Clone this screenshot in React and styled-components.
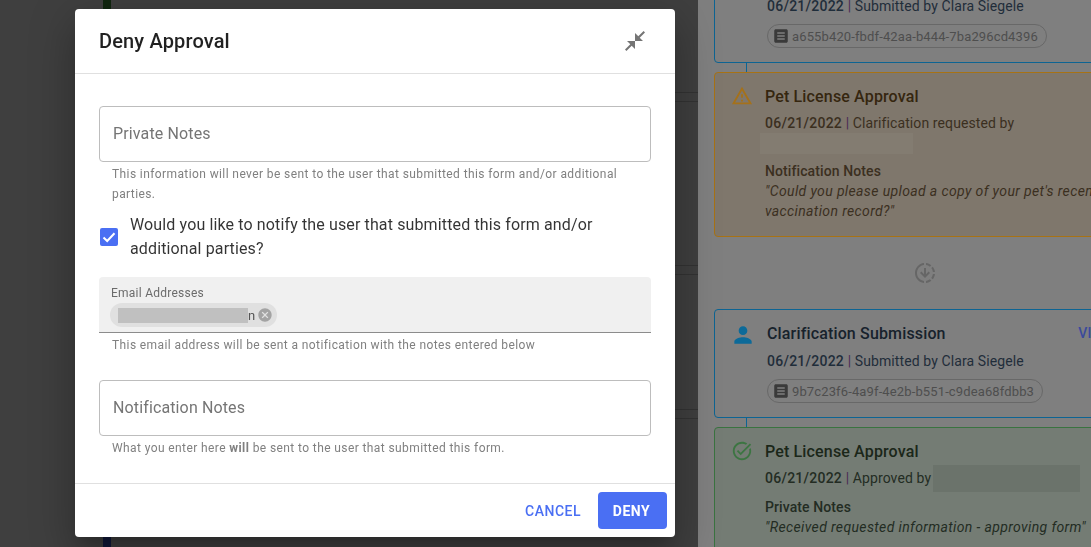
import React from 'react';
import styled, { createGlobalStyle } from 'styled-components';

const GlobalStyle = createGlobalStyle`
  html, body { margin: 0; padding: 0; height: 100%; overflow: hidden; }
  body { font-family: Roboto, "Liberation Sans", sans-serif; }
`;

const Page = styled.div`
  display: flex;
  width: 1091px;
  height: 547px;
  overflow: hidden;
`;

/* dimmed list behind the dialog */
const ListPane = styled.div`
  display: flex;
  flex: 0 0 698px;
  height: 100%;
  background: #3f3f3f;
`;
const Stripe = styled.div`
  display: flex;
  flex-direction: column;
  flex: 0 0 8px;
  margin-left: 103px;
`;
const StripePart = styled.div`
  flex: ${(p) => p.$grow};
  background: ${(p) => p.$color};
`;
const Rows = styled.div`
  flex: 1;
`;
const Row = styled.div`
  height: ${(p) => p.$height}px;
  box-sizing: border-box;
  border-bottom: 1px solid #333;
`;

/* timeline */
const TimelinePane = styled.div`
  flex: 1;
  height: 100%;
  overflow: hidden;
  background: #7f7f7f;
  padding-left: 16px;
`;
const Timeline = styled.div`
  display: flex;
  flex-direction: column;
  width: 422px;
  margin-top: -46px;
`;
const toneColors = {
  blue: { border: '#0d6493', bg: 'transparent', title: '#17222c', text: '#1f2d3a', icon: '#0c6a99' },
  orange: { border: '#a87214', bg: '#7f776c', title: '#35260f', text: '#3b2f1f', icon: '#a5711a' },
  green: { border: '#3a7340', bg: '#747c74', title: '#1b2719', text: '#232c23', icon: '#3c7542' },
};
const Card = styled.div`
  display: flex;
  gap: ${(p) => (p.$tone === 'blue' ? 11 : 12)}px;
  box-sizing: border-box;
  flex: none;
  height: ${(p) => p.$height}px;
  padding: 11px 22px 0 ${(p) => (p.$tone === 'blue' ? 15 : 16)}px;
  border: 1px solid ${(p) => toneColors[p.$tone].border};
  border-radius: 4px;
  background: ${(p) => toneColors[p.$tone].bg};
  color: ${(p) => toneColors[p.$tone].text};
`;
const CardIcon = styled.svg`
  flex: none;
  width: ${(p) => p.$size}px;
  height: ${(p) => p.$size}px;
  margin-top: 1px;
  fill: ${(p) => toneColors[p.$tone].icon};
`;
const CardBody = styled.div`
  flex: 1;
  min-width: 0;
`;
const TitleRow = styled.div`
  display: flex;
  justify-content: space-between;
  align-items: center;
  height: 24px;
  font-size: 16px;
  font-weight: 500;
  letter-spacing: 0.15px;
  color: ${(p) => toneColors[p.$tone].title};
`;
const ViewLink = styled.span`
  font-size: 14px;
  font-weight: 500;
  color: #3b4a9c;
  letter-spacing: 0.4px;
`;
const MetaLine = styled.div`
  display: flex;
  align-items: center;
  height: 20px;
  margin-top: ${(p) => p.$top}px;
  font-size: 14px;
  letter-spacing: 0.1px;
`;
const MetaText = styled.span`
  white-space: pre;
`;
const DateText = styled.span`
  font-weight: 500;
  letter-spacing: 0.25px;
`;
const Pipe = styled.span`
  color: #4a2a55;
`;
const Redacted = styled.div`
  flex: none;
  width: ${(p) => p.$width}px;
  height: ${(p) => p.$height}px;
  margin-left: ${(p) => p.$left || 0}px;
  background: ${(p) => p.$color};
`;
const IdChip = styled.div`
  display: inline-flex;
  align-items: center;
  gap: 2px;
  box-sizing: border-box;
  height: 24px;
  margin-top: 8px;
  padding: 0 8px 0 4px;
  border: 1px solid #686868;
  border-radius: 12px;
  font-size: 13px;
  letter-spacing: 0.13px;
  color: #4e4e4e;
`;
const IdIcon = styled.svg`
  width: 18px;
  height: 18px;
  fill: #3a3a3a;
`;
const NoteLabel = styled.div`
  margin-top: ${(p) => p.$top}px;
  font-size: 14px;
  line-height: 20px;
  font-weight: 500;
  letter-spacing: 0.1px;
`;
const NoteText = styled.div`
  font-size: 14px;
  line-height: 20px;
  font-style: italic;
  letter-spacing: 0.37px;
`;
const Connector = styled.div`
  flex: none;
  width: 1px;
  height: 9px;
  margin-left: 32px;
  background: #0d6493;
`;
const RoundDivider = styled.div`
  display: flex;
  align-items: center;
  justify-content: center;
  flex: none;
  height: 72px;
`;
const DividerIcon = styled.svg`
  width: 24px;
  height: 24px;
  fill: #666;
`;

/* dialog */
const ModalLayer = styled.div`
  position: fixed;
  inset: 0;
  padding: 9px 0 0 75px;
`;
const Dialog = styled.div`
  display: flex;
  flex-direction: column;
  width: 600px;
  height: 528px;
  background: #fff;
  border-radius: 4px;
  box-shadow: 0 11px 15px -7px rgba(0, 0, 0, 0.2), 0 24px 38px 3px rgba(0, 0, 0, 0.14), 0 9px 46px 8px rgba(0, 0, 0, 0.12);
`;
const DialogHeader = styled.header`
  display: flex;
  align-items: center;
  justify-content: space-between;
  box-sizing: border-box;
  height: 65px;
  padding: 0 28px 0 24px;
  border-bottom: 1px solid #e0e0e0;
`;
const DialogTitle = styled.h2`
  margin: 0;
  font-size: 20px;
  font-weight: 500;
  letter-spacing: 0.15px;
  color: rgba(0, 0, 0, 0.87);
`;
const CollapseIcon = styled.svg`
  width: 24px;
  height: 24px;
  fill: #757575;
`;
const DialogBody = styled.div`
  flex: 1;
  padding: 32px 24px 0;
`;
const OutlinedField = styled.div`
  display: flex;
  align-items: center;
  box-sizing: border-box;
  height: 56px;
  padding: 0 13px 2px;
  border: 1px solid #bdbdbd;
  border-radius: 4px;
  font-size: 16px;
  letter-spacing: 0.13px;
  color: #757575;
`;
const Helper = styled.p`
  margin: 2px 0 0;
  padding: 0 14px 0 13px;
  font-size: 12px;
  line-height: 20px;
  letter-spacing: 0.4px;
  color: #808080;
  b { font-weight: 700; }
`;
const CheckRow = styled.div`
  display: flex;
  align-items: center;
  gap: 12px;
  margin: 9px 0 16px;
  padding-left: 1px;
`;
const CheckBox = styled.div`
  display: flex;
  align-items: center;
  justify-content: center;
  flex: none;
  width: 18px;
  height: 18px;
  border-radius: 2px;
  background: #4a6ff3;
`;
const CheckLabel = styled.div`
  font-size: 16px;
  line-height: 24px;
  letter-spacing: 0.13px;
  color: rgba(0, 0, 0, 0.8);
`;
const FilledField = styled.div`
  box-sizing: border-box;
  height: 56px;
  padding: 9px 12px 0;
  background: #f0f0f0;
  border-bottom: 1px solid #8c8c8c;
  border-radius: 4px 4px 0 0;
`;
const FilledLabel = styled.div`
  height: 14px;
  font-size: 12px;
  line-height: 14px;
  letter-spacing: 0.25px;
  color: #6b6b6b;
`;
const EmailChip = styled.div`
  display: inline-flex;
  align-items: center;
  box-sizing: border-box;
  height: 24px;
  margin: 3px 0 0 -1px;
  padding: 0 4px 0 8px;
  border-radius: 12px;
  background: #e0e0e0;
  font-size: 13px;
  color: #555;
`;
const ChipDelete = styled.svg`
  width: 16px;
  height: 16px;
  margin-left: 2px;
  fill: #a3a3a3;
`;
const NotesField = styled(OutlinedField)`
  margin-top: 25px;
`;
const DialogFooter = styled.footer`
  display: flex;
  align-items: center;
  justify-content: flex-end;
  gap: 17px;
  box-sizing: border-box;
  height: 54px;
  padding: 0 8px;
  border-top: 1px solid #e0e0e0;
`;
const TextButton = styled.button`
  padding: 0;
  border: 0;
  background: none;
  font: 500 14px Roboto, sans-serif;
  letter-spacing: 0.5px;
  color: #4a6ff3;
`;
const FilledButton = styled.button`
  width: 69px;
  height: 37px;
  padding: 0 2px 0 0;
  border: 0;
  border-radius: 4px;
  background: #4a6ff3;
  font: 700 14px Roboto, sans-serif;
  letter-spacing: 0.5px;
  color: #fff;
`;

const paths = {
  person: 'M12 12c2.21 0 4-1.79 4-4s-1.79-4-4-4-4 1.79-4 4 1.79 4 4 4zm0 2c-2.67 0-8 1.34-8 4v2h16v-2c0-2.66-5.33-4-8-4z',
  warning: 'M12 5.99 19.53 19H4.47L12 5.99M12 2 1 21h22L12 2zm1 14h-2v2h2v-2zm0-6h-2v4h2v-4z',
  check: 'M22 5.18 10.59 16.6l-4.24-4.24 1.41-1.41 2.83 2.83 10-10L22 5.18zm-2.21 5.04c.13.57.21 1.17.21 1.78 0 4.42-3.58 8-8 8s-8-3.58-8-8 3.58-8 8-8c1.58 0 3.04.46 4.28 1.22l1.44-1.44C16.1 2.67 14.13 2 12 2 6.48 2 2 6.48 2 12s4.48 10 10 10 10-4.48 10-10c0-1.19-.22-2.33-.6-3.39l-1.61 1.61z',
  doc: 'M19 3H5c-1.1 0-2 .9-2 2v14c0 1.1.9 2 2 2h14c1.1 0 2-.9 2-2V5c0-1.1-.9-2-2-2zm-2 14H7v-2h10v2zm0-4H7v-2h10v2zm0-4H7V7h10v2z',
  downloading: 'M18.32 4.26C16.84 3.05 15.01 2.25 13 2.05v2.02c1.46.18 2.79.76 3.9 1.62l1.42-1.43zM19.93 11h2.02c-.2-2.01-1-3.84-2.21-5.32L18.31 7.1c.86 1.11 1.44 2.44 1.62 3.9zm-1.62 5.9 1.43 1.43c1.21-1.48 2.01-3.32 2.21-5.32h-2.02c-.18 1.45-.76 2.78-1.62 3.89zM13 19.93v2.02c2.01-.2 3.84-1 5.32-2.21l-1.43-1.43c-1.1.86-2.43 1.44-3.89 1.62zm2.59-9.34L13 13.17V7h-2v6.17l-2.59-2.59L7 12l5 5 5-5-1.41-1.41zM11 19.93v2.02c-5.05-.5-9-4.76-9-9.95s3.95-9.45 9-9.95v2.02C7.05 4.56 4 7.92 4 12s3.05 7.44 7 7.93z',
  collapse: 'M22 3.41 16.71 8.7 20 12h-8V4l3.29 3.29L20.59 2 22 3.41zM3.41 22l5.29-5.29L12 20v-8H4l3.29 3.29L2 20.59 3.41 22z',
  cancel: 'M12 2C6.47 2 2 6.47 2 12s4.47 10 10 10 10-4.47 10-10S17.53 2 12 2zm5 13.59L15.59 17 12 13.41 8.41 17 7 15.59 10.59 12 7 8.41 8.41 7 12 10.59 15.59 7 17 8.41 13.41 12 17 15.59z',
};

function SubmissionCard({ title, id }) {
  return (
    <Card $tone="blue" $height={109}>
      <CardIcon $tone="blue" $size={26} viewBox="0 0 24 24"><path d={paths.person} /></CardIcon>
      <CardBody>
        <TitleRow $tone="blue">{title}<ViewLink>VIEW</ViewLink></TitleRow>
        <MetaLine $top={6}>
          <MetaText><DateText>06/21/2022</DateText> <Pipe>|</Pipe> Submitted by Clara Siegele</MetaText>
        </MetaLine>
        <IdChip>
          <IdIcon viewBox="0 0 24 24"><path d={paths.doc} /></IdIcon>
          {id}
        </IdChip>
      </CardBody>
    </Card>
  );
}

function App() {
  return (
    <Page>
      <GlobalStyle />
      <ListPane>
        <Stripe>
          <StripePart $grow={1} $color="#10260f" />
          <StripePart $grow={1} $color="#10183a" />
        </Stripe>
        <Rows>
          <Row $height={93} />
          <Row $height={9} />
          <Row $height={164} />
          <Row $height={9} />
          <Row $height={135} />
          <Row $height={9} />
        </Rows>
      </ListPane>

      <TimelinePane>
        <Timeline>
          <SubmissionCard title="Clarification Submission" id="a655b420-fbdf-42aa-b444-7ba296cd4396" />
          <Connector />
          <Card $tone="orange" $height={165}>
            <CardIcon $tone="orange" $size={22} viewBox="0 0 24 24"><path d={paths.warning} /></CardIcon>
            <CardBody>
              <TitleRow $tone="orange">Pet License Approval</TitleRow>
              <MetaLine $top={5}>
                <MetaText><DateText>06/21/2022</DateText> <Pipe>|</Pipe> Clarification requested by</MetaText>
              </MetaLine>
              <Redacted $width={153} $height={21} $left={-5} $color="#837c71" />
              <NoteLabel $top={7}>Notification Notes</NoteLabel>
              <NoteText>"Could you please upload a copy of your pet's recent vaccination record?"</NoteText>
            </CardBody>
          </Card>
          <RoundDivider>
            <DividerIcon viewBox="0 0 24 24"><path d={paths.downloading} /></DividerIcon>
          </RoundDivider>
          <SubmissionCard title="Clarification Submission" id="9b7c23f6-4a9f-4e2b-b551-c9dea68fdbb3" />
          <Connector />
          <Card $tone="green" $height={150}>
            <CardIcon $tone="green" $size={22} viewBox="0 0 24 24"><path d={paths.check} /></CardIcon>
            <CardBody>
              <TitleRow $tone="green">Pet License Approval</TitleRow>
              <MetaLine $top={5}>
                <MetaText><DateText>06/21/2022</DateText> <Pipe>|</Pipe> Approved by</MetaText>
                <Redacted $width={147} $height={27} $left={2} $color="#6b736b" />
              </MetaLine>
              <NoteLabel $top={9}>Private Notes</NoteLabel>
              <NoteText>"Received requested information - approving form"</NoteText>
            </CardBody>
          </Card>
        </Timeline>
      </TimelinePane>

      <ModalLayer>
        <Dialog>
          <DialogHeader>
            <DialogTitle>Deny Approval</DialogTitle>
            <CollapseIcon viewBox="0 0 24 24"><path d={paths.collapse} /></CollapseIcon>
          </DialogHeader>
          <DialogBody>
            <OutlinedField>Private Notes</OutlinedField>
            <Helper>This information will never be sent to the user that submitted this form and/or additional parties.</Helper>
            <CheckRow>
              <CheckBox>
                <svg width="14" height="14" viewBox="0 0 14 14" fill="none" stroke="#fff" strokeWidth="2">
                  <path d="M1.5 7.5 5.2 11 12.5 3.2" />
                </svg>
              </CheckBox>
              <CheckLabel>Would you like to notify the user that submitted this form and/or additional parties?</CheckLabel>
            </CheckRow>
            <FilledField>
              <FilledLabel>Email Addresses</FilledLabel>
              <EmailChip>
                <Redacted $width={130} $height={15} $color="#c0c0c0" />
                n
                <ChipDelete viewBox="0 0 24 24"><path d={paths.cancel} /></ChipDelete>
              </EmailChip>
            </FilledField>
            <Helper>This email address will be sent a notification with the notes entered below</Helper>
            <NotesField>Notification Notes</NotesField>
            <Helper>What you enter here <b>will</b> be sent to the user that submitted this form.</Helper>
          </DialogBody>
          <DialogFooter>
            <TextButton>CANCEL</TextButton>
            <FilledButton>DENY</FilledButton>
          </DialogFooter>
        </Dialog>
      </ModalLayer>
    </Page>
  );
}

export default App;
